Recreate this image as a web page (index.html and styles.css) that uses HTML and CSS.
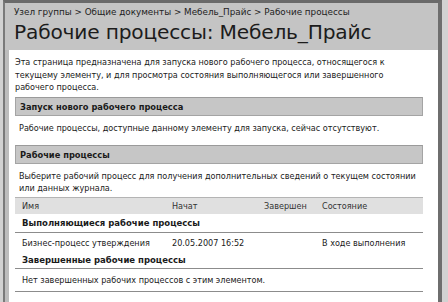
FILE: index.html
```html
<!DOCTYPE html>
<html lang="ru">
<head>
<meta charset="utf-8">
<link rel="stylesheet" href="styles.css">
</head>
<body>
<div class="window">
  <div class="header">
    <div class="crumbs">Узел группы &gt; Общие документы &gt; Мебель_Прайс &gt; Рабочие процессы</div>
    <h1 class="title">Рабочие процессы: Мебель_Прайс</h1>
  </div>
  <div class="body">
    <div class="content">
      <p class="intro">Эта страница предназначена для запуска нового рабочего процесса, относящегося к текущему элементу, и для просмотра состояния выполняющегося или завершенного рабочего процесса.</p>
      <div class="section-bar">Запуск нового рабочего процесса</div>
      <p class="section-text">Рабочие процессы, доступные данному элементу для запуска, сейчас отсутствуют.</p>
      <div class="section-bar">Рабочие процессы</div>
      <p class="section-text last">Выберите рабочий процесс для получения дополнительных сведений о текущем состоянии или данных журнала.</p>
      <div class="table">
        <div class="thead">
          <span class="c-name">Имя</span><span class="c-start">Начат</span><span class="c-end">Завершен</span><span class="c-state">Состояние</span>
        </div>
        <div class="group">Выполняющиеся рабочие процессы</div>
        <div class="row">
          <span class="c-name">Бизнес-процесс утверждения</span><span class="c-start">20.05.2007 16:52</span><span class="c-end"></span><span class="c-state">В ходе выполнения</span>
        </div>
        <div class="group second">Завершенные рабочие процессы</div>
        <div class="row empty">Нет завершенных рабочих процессов с этим элементом.</div>
      </div>
    </div>
  </div>
</div>
</body>
</html>
```
FILE: styles.css
```css
html, body {
  margin: 0;
  padding: 0;
}
body {
  width: 448px;
  height: 302px;
  overflow: hidden;
  background: #d2d2d2;
  font-family: Tahoma, "DejaVu Sans", sans-serif;
  color: #1a1a1a;
}
.window {
  margin-left: 3px;
  width: 439px;
  height: 302px;
  border-left: 2px solid #7a7a7a;
  border-top: 3px solid #6a6a6a;
  border-right: 4px solid #6e6e6e;
  background: #bdbdbd;
  box-sizing: border-box;
}
.header {
  background: #c4c4c4;
  padding: 4px 0 0 9px;
  height: 47px;
  box-sizing: border-box;
}
.crumbs {
  font-size: 8.8px;
  line-height: 11px;
  color: #222;
}
.title {
  margin: 1px 0 0;
  font-weight: normal;
  font-size: 20.2px;
  line-height: 26px;
  color: #1c1c1c;
  letter-spacing: -0.2px;
}
.body {
  padding-left: 4px;
  background: #bdbdbd;
  height: 252px;
}
.content {
  background: #fff;
  height: 100%;
  padding: 6px 15px 0 6px;
  box-sizing: border-box;
  font-size: 8.1px;
  line-height: 12px;
}
.intro {
  margin: 0 0 3px;
  line-height: 12.5px;
}
.section-bar {
  background: #c6c6c6;
  border: 1px solid #a4a4a4;
  border-top-color: #9a9a9a;
  font-weight: bold;
  font-size: 8.3px;
  padding: 3px 4px 2px;
  line-height: 12px;
}
.section-text {
  margin: 6px 0 11px 4px;
}
.section-text.last {
  margin-bottom: 3px;
}
.thead {
  display: grid;
  grid-template-columns: 150px 92px 58px 1fr;
  background: #e0e0e0;
  border-top: 1px solid #b4b4b4;
  padding: 2px 7px 2px;
  color: #333;
}
.row {
  display: grid;
  grid-template-columns: 150px 92px 58px 1fr;
  padding: 4px 7px 2px;
}
.group {
  font-weight: bold;
  font-size: 8.5px;
  padding: 3px 7px 3px;
  border-bottom: 1px solid #8c8c8c;
}
.group.second {
  padding-bottom: 2px;
}
.row.empty {
  display: block;
  padding: 5px 7px 5px;
  border-bottom: 1px solid #8c8c8c;
}
```
